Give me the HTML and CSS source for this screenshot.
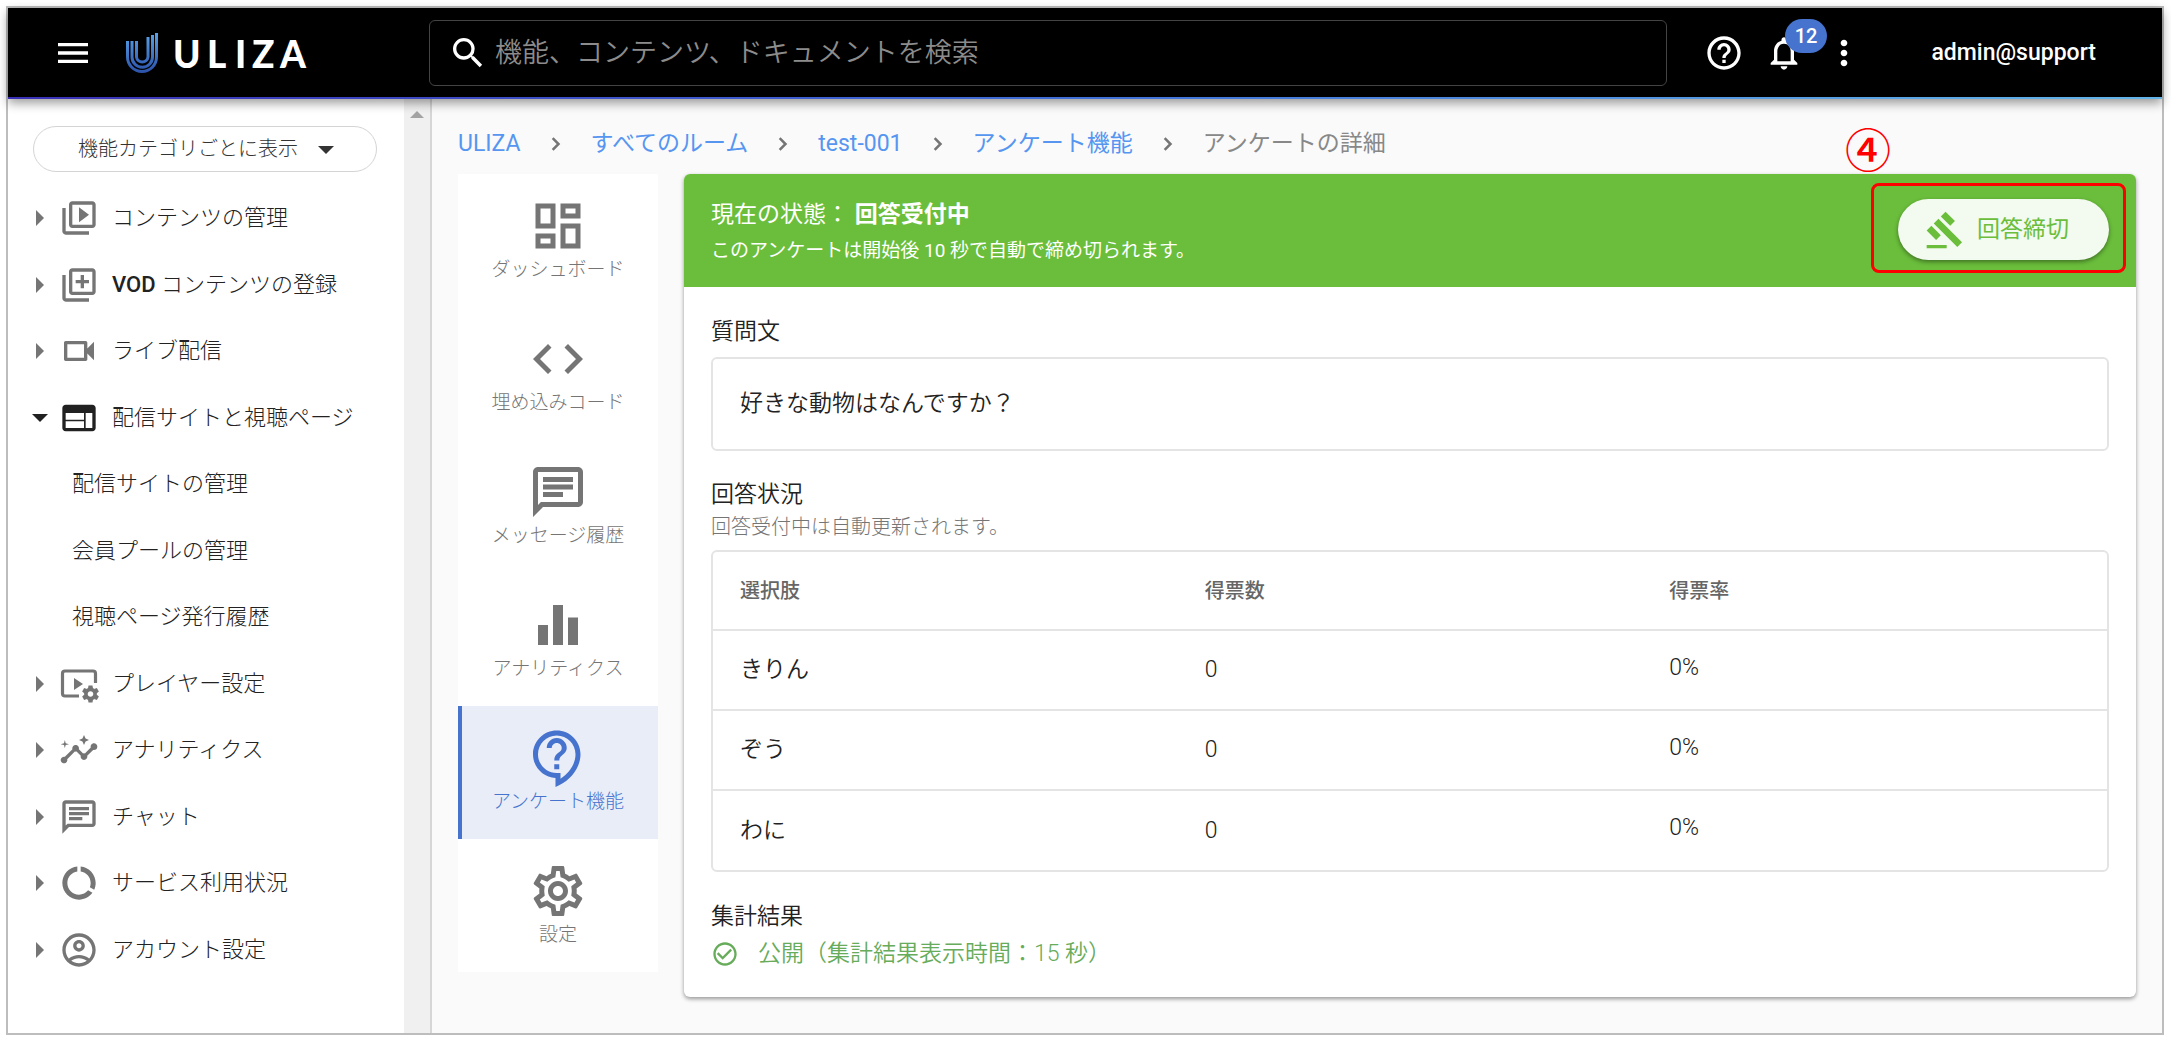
FILE: index.html
```html
<!DOCTYPE html>
<html lang="ja">
<head>
<meta charset="utf-8">
<meta name="viewport" content="width=device-width, initial-scale=1">
<title>アンケートの詳細 - ULIZA</title>
<link rel="stylesheet" href="styles.css">
</head>
<body>
<div class="app">
  <header class="topbar">
    <div class="topbar-brand">
      <button class="icon-button" type="button" aria-label="メニュー">
        <svg class="icon" viewBox="0 0 24 24"><path d="M3 18h18v-2H3v2zm0-5h18v-2H3v2zm0-7v2h18V6H3z"/></svg>
      </button>
      <a class="logo" href="#" aria-label="ULIZA">
        <svg width="200" height="60" viewBox="0 -9 200 60">
          <defs>
            <linearGradient id="mark" x1="0" y1="42" x2="0" y2="0" gradientUnits="userSpaceOnUse">
              <stop offset="0" stop-color="#2a4fa8"/><stop offset="1" stop-color="#5aa5ea"/>
            </linearGradient>
          </defs>
          <g fill="none" stroke="url(#mark)" stroke-width="3">
            <path d="M1.500 9V25a14.500 14.500 0 0 0 29 0V1"/>
            <path d="M6 9V25a10 10 0 0 0 20.500 0V3"/>
            <path d="M10.500 9V25a5.800 5.800 0 0 0 11.500 0V5"/>
          </g>
          <text class="logo-text" y="36" x="47 81 109 126 154">ULIZA</text>
        </svg>
      </a>
    </div>
    <label class="search">
      <svg class="icon" viewBox="0 0 24 24"><path d="M15.500 14h-.79l-.28-.27A6.471 6.471 0 0 0 16 9.500 6.500 6.500 0 1 0 9.500 16c1.610 0 3.090-.59 4.230-1.570l.27.28v.79l5 4.990L20.490 19l-4.990-5zm-6 0C7.010 14 5 11.990 5 9.500S7.010 5 9.500 5 14 7.010 14 9.500 11.990 14 9.500 14z"/></svg>
      <input class="search-input" type="search" placeholder="機能、コンテンツ、ドキュメントを検索" aria-label="検索">
    </label>
    <div class="topbar-actions">
      <button class="icon-button" type="button" aria-label="ヘルプ">
        <svg class="icon" viewBox="0 0 24 24"><path d="M11 18h2v-2h-2v2zm1-16C6.480 2 2 6.480 2 12s4.480 10 10 10 10-4.480 10-10S17.520 2 12 2zm0 18c-4.410 0-8-3.590-8-8s3.590-8 8-8 8 3.590 8 8-3.590 8-8 8zm0-14c-2.210 0-4 1.790-4 4h2c0-1.100.9-2 2-2s2 .9 2 2c0 2-3 1.750-3 5h2c0-2.250 3-2.500 3-5 0-2.210-1.790-4-4-4z"/></svg>
      </button>
      <button class="icon-button" type="button" aria-label="お知らせ">
        <svg class="icon" viewBox="0 0 24 24"><path d="M12 22c1.100 0 2-.9 2-2h-4c0 1.100.9 2 2 2zm6-6v-5c0-3.070-1.630-5.640-4.500-6.320V4c0-.83-.67-1.500-1.500-1.500s-1.500.67-1.500 1.500v.68C7.640 5.360 6 7.920 6 11v5l-2 2v1h16v-1l-2-2zm-2 1H8v-6c0-2.480 1.510-4.500 4-4.500s4 2.020 4 4.500v6z"/></svg>
        <span class="badge">12</span>
      </button>
      <button class="icon-button" type="button" aria-label="その他">
        <svg class="icon" viewBox="0 0 24 24"><path d="M12 8c1.100 0 2-.9 2-2s-.9-2-2-2-2 .9-2 2 .9 2 2 2zm0 2c-1.100 0-2 .9-2 2s.9 2 2 2 2-.9 2-2-.9-2-2-2zm0 6c-1.100 0-2 .9-2 2s.9 2 2 2 2-.9 2-2-.9-2-2-2z"/></svg>
      </button>
      <span class="account">admin@support</span>
    </div>
  </header>

  <div class="body">
    <aside class="sidebar">
      <div class="sidebar-content">
        <div class="view-select">
          <select class="view-select-input" aria-label="表示方法">
            <option>機能カテゴリごとに表示</option>
          </select>
          <svg class="view-select-arrow" viewBox="0 0 16 8"><path d="M0 0h16L8 8z"/></svg>
        </div>
        <nav class="menu">
          <a class="menu-item" href="#">
            <span class="caret"></span>
            <svg class="icon" viewBox="0 0 24 24"><path d="M4 6H2v14c0 1.100.9 2 2 2h14v-2H4V6zm16-4H8c-1.100 0-2 .9-2 2v12c0 1.100.9 2 2 2h12c1.100 0 2-.9 2-2V4c0-1.100-.9-2-2-2zm0 14H8V4h12v12zM12 5.500v9l6-4.500z"/></svg>
            <span>コンテンツの管理</span>
          </a>
          <a class="menu-item" href="#">
            <span class="caret"></span>
            <svg class="icon" viewBox="0 0 24 24"><path d="M4 6H2v14c0 1.100.9 2 2 2h14v-2H4V6zm16-4H8c-1.100 0-2 .9-2 2v12c0 1.100.9 2 2 2h12c1.100 0 2-.9 2-2V4c0-1.100-.9-2-2-2zm0 14H8V4h12v12zM13 14h2v-3h3V9h-3V6h-2v3h-3v2h3z"/></svg>
            <span><span class="latin">VOD</span> コンテンツの登録</span>
          </a>
          <a class="menu-item" href="#">
            <span class="caret"></span>
            <svg class="icon" viewBox="0 0 24 24"><path d="M15 8v8H5V8h10m1-2H4c-.55 0-1 .45-1 1v10c0 .55.450 1 1 1h12c.55 0 1-.45 1-1v-3.500l4 4v-11l-4 4V7c0-.55-.45-1-1-1z"/></svg>
            <span>ライブ配信</span>
          </a>
          <a class="menu-item menu-item-open" href="#">
            <span class="caret"></span>
            <svg class="icon" viewBox="0 0 24 24"><path d="M20 4H4c-1.100 0-1.990.9-1.990 2L2 18c0 1.100.9 2 2 2h16c1.100 0 2-.9 2-2V6c0-1.100-.9-2-2-2zm-5 14H4v-4h11v4zm0-5H4V9h11v4zm5 5h-4V9h4v9z"/></svg>
            <span>配信サイトと視聴ページ</span>
          </a>
          <a class="menu-item menu-subitem" href="#">配信サイトの管理</a>
          <a class="menu-item menu-subitem" href="#">会員プールの管理</a>
          <a class="menu-item menu-subitem" href="#">視聴ページ発行履歴</a>
          <a class="menu-item" href="#">
            <span class="caret"></span>
            <svg class="icon" viewBox="0 0 40 40">
              <path d="M20 32H6a2.500 2.500 0 0 1-2.500-2.500v-20A2.500 2.500 0 0 1 6 7h28a2.500 2.500 0 0 1 2.500 2.500V19" fill="none" stroke="currentColor" stroke-width="3.200"/>
              <path d="M15 14v12l9-6z"/>
              <g transform="translate(31.500 30)">
                <circle r="4.600" fill="none" stroke="currentColor" stroke-width="3.600"/>
                <path d="M-2-8.500h4l.5 3h-5zM-2 8.500h4l.5-3h-5z"/>
                <path d="M-2-8.500h4l.5 3h-5zM-2 8.500h4l.5-3h-5z" transform="rotate(60)"/>
                <path d="M-2-8.500h4l.5 3h-5zM-2 8.500h4l.5-3h-5z" transform="rotate(120)"/>
              </g>
            </svg>
            <span>プレイヤー設定</span>
          </a>
          <a class="menu-item" href="#">
            <span class="caret"></span>
            <svg class="icon" viewBox="0 0 24 24"><path d="M21 8c-1.450 0-2.260 1.440-1.930 2.510l-3.550 3.560c-.3-.09-.74-.09-1.040 0l-2.550-2.550C12.270 10.450 11.460 9 10 9c-1.450 0-2.270 1.440-1.930 2.520l-4.560 4.550C2.440 15.740 1 16.550 1 18c0 1.100.9 2 2 2 1.450 0 2.260-1.440 1.930-2.510l4.550-4.560c.3.09.740.09 1.040 0l2.550 2.550C12.730 16.550 13.540 18 15 18c1.450 0 2.270-1.440 1.930-2.520l3.560-3.550c1.070.33 2.510-.48 2.510-1.930 0-1.100-.9-2-2-2zM15 9l.94-2.070L18 6l-2.060-.93L15 3l-.92 2.070L12 6l2.080.93zM3.500 11L4 9l2-.5L4 8l-.5-2L3 8l-2 .5L3 9z"/></svg>
            <span>アナリティクス</span>
          </a>
          <a class="menu-item" href="#">
            <span class="caret"></span>
            <svg class="icon" viewBox="0 0 24 24"><path d="M4 4h16v12H5.170L4 17.170V4m0-2c-1.100 0-1.990.9-1.990 2L2 22l4-4h14c1.100 0 2-.9 2-2V4c0-1.100-.9-2-2-2H4zm2 10h8v2H6v-2zm0-3h12v2H6V9zm0-3h12v2H6V6z"/></svg>
            <span>チャット</span>
          </a>
          <a class="menu-item" href="#">
            <span class="caret"></span>
            <svg class="icon" viewBox="0 0 24 24"><path d="M13 2.050v3.030c3.390.49 6 3.390 6 6.920 0 .9-.18 1.750-.48 2.540l2.600 1.530c.56-1.240.88-2.620.88-4.070 0-5.180-3.950-9.450-9-9.950zM12 19c-3.870 0-7-3.130-7-7 0-3.530 2.610-6.430 6-6.920V2.050c-5.060.5-9 4.760-9 9.950 0 5.520 4.470 10 9.990 10 3.310 0 6.240-1.610 8.060-4.090l-2.600-1.530C16.170 17.980 14.210 19 12 19z"/></svg>
            <span>サービス利用状況</span>
          </a>
          <a class="menu-item" href="#">
            <span class="caret"></span>
            <svg class="icon" viewBox="0 0 24 24"><path d="M12 2C6.480 2 2 6.480 2 12s4.480 10 10 10 10-4.480 10-10S17.520 2 12 2zM7.350 18.500C8.660 17.560 10.260 17 12 17s3.340.56 4.650 1.500C15.340 19.440 13.740 20 12 20s-3.340-.56-4.650-1.500zm10.790-1.380C16.450 15.800 14.320 15 12 15s-4.450.8-6.140 2.120C4.700 15.730 4 13.950 4 12c0-4.420 3.580-8 8-8s8 3.580 8 8c0 1.950-.7 3.730-1.860 5.120zM12 6c-1.930 0-3.500 1.570-3.500 3.500S10.070 13 12 13s3.500-1.570 3.500-3.500S13.930 6 12 6zm0 5c-.83 0-1.500-.67-1.500-1.500S11.170 8 12 8s1.500.67 1.500 1.500S12.830 11 12 11z"/></svg>
            <span>アカウント設定</span>
          </a>
        </nav>
      </div>
      <div class="scroll-track"><span class="scroll-up"></span></div>
    </aside>

    <main class="main">
      <nav class="breadcrumb" aria-label="パンくず">
        <a href="#">ULIZA</a>
        <svg class="chevron" viewBox="0 0 24 24"><path d="M8 5l7 7-7 7"/></svg>
        <a href="#">すべてのルーム</a>
        <svg class="chevron" viewBox="0 0 24 24"><path d="M8 5l7 7-7 7"/></svg>
        <a href="#">test-001</a>
        <svg class="chevron" viewBox="0 0 24 24"><path d="M8 5l7 7-7 7"/></svg>
        <a href="#">アンケート機能</a>
        <svg class="chevron" viewBox="0 0 24 24"><path d="M8 5l7 7-7 7"/></svg>
        <span>アンケートの詳細</span>
      </nav>

      <div class="columns">
        <nav class="tabs">
          <a class="tab" href="#">
            <svg class="tab-icon" viewBox="0 0 24 24"><path d="M19 5v2h-4V5h4M9 5v6H5V5h4m10 8v6h-4v-6h4M9 17v2H5v-2h4M21 3h-8v6h8V3zM11 3H3v10h8V3zm10 8h-8v10h8V11zm-10 4H3v6h8v-6z"/></svg>
            <span>ダッシュボード</span>
          </a>
          <a class="tab" href="#">
            <svg class="tab-icon" viewBox="0 0 24 24"><path d="M9.400 16.600L4.800 12l4.600-4.600L8 6l-6 6 6 6 1.400-1.400zm5.200 0l4.600-4.600-4.600-4.600L16 6l6 6-6 6-1.400-1.400z"/></svg>
            <span>埋め込みコード</span>
          </a>
          <a class="tab" href="#">
            <svg class="tab-icon" viewBox="0 0 24 24"><path d="M4 4h16v12H5.170L4 17.170V4m0-2c-1.100 0-1.990.9-1.990 2L2 22l4-4h14c1.100 0 2-.9 2-2V4c0-1.100-.9-2-2-2H4zm2 10h8v2H6v-2zm0-3h12v2H6V9zm0-3h12v2H6V6z"/></svg>
            <span>メッセージ履歴</span>
          </a>
          <a class="tab" href="#">
            <svg class="tab-icon" viewBox="0 0 24 24"><path d="M10 20h4V4h-4v16zm-6 0h4v-8H4v8zM16 9v11h4V9h-4z"/></svg>
            <span>アナリティクス</span>
          </a>
          <a class="tab tab-active" href="#" aria-current="page">
            <svg class="tab-icon" viewBox="0 0 24 24"><path d="M11 23.590v-3.600c-5.010-.26-9-4.420-9-9.490C2 5.260 6.260 1 11.500 1S21 5.260 21 10.500c0 4.950-3.440 9.930-8.570 12.400l-1.430.69zM11.500 3C7.360 3 4 6.360 4 10.500S7.360 18 11.500 18H13v2.300c3.640-2.300 6-6.080 6-9.800C19 6.360 15.640 3 11.500 3zm-1 11.500h2v2h-2zm2-1.500h-2c0-3.250 3-3 3-5 0-1.100-.9-2-2-2s-2 .9-2 2h-2c0-2.210 1.790-4 4-4s4 1.790 4 4c0 2.500-3 2.750-3 5z"/></svg>
            <span>アンケート機能</span>
          </a>
          <a class="tab" href="#">
            <svg class="tab-icon" viewBox="0 0 24 24"><path d="M19.430 12.980c.04-.32.070-.64.070-.98 0-.34-.03-.66-.07-.98l2.110-1.650c.19-.15.240-.42.120-.64l-2-3.460c-.09-.16-.26-.25-.44-.25-.06 0-.12.010-.17.030l-2.490 1c-.52-.4-1.080-.73-1.690-.98l-.38-2.650C14.460 2.180 14.250 2 14 2h-4c-.25 0-.46.180-.49.420l-.38 2.650c-.61.250-1.170.590-1.690.980l-2.490-1c-.06-.02-.12-.03-.18-.03-.17 0-.34.090-.43.250l-2 3.460c-.13.220-.07.490.120.640l2.110 1.650c-.04.320-.07.650-.07.980 0 .330.030.660.070.980l-2.110 1.650c-.19.150-.24.420-.12.640l2 3.460c.09.160.260.250.440.250.060 0 .120-.01.170-.03l2.490-1c.52.400 1.080.730 1.690.980l.38 2.650c.03.240.240.420.490.420h4c.25 0 .460-.18.490-.42l.38-2.650c.61-.25 1.170-.59 1.690-.98l2.490 1c.06.020.120.030.180.030.170 0 .340-.09.430-.25l2-3.460c.12-.22.070-.49-.12-.64l-2.110-1.650zm-1.980-1.710c.04.310.050.520.050.730 0 .210-.02.430-.05.730l-.14 1.130.89.700 1.080.840-.7 1.210-1.270-.51-1.040-.42-.9.680c-.43.320-.84.560-1.250.730l-1.060.430-.16 1.130-.2 1.350h-1.400l-.19-1.350-.16-1.130-1.060-.43c-.43-.18-.83-.41-1.230-.71l-.91-.7-1.060.430-1.270.510-.7-1.210 1.080-.84.890-.7-.14-1.130c-.03-.31-.05-.54-.05-.74s.02-.43.050-.73l.14-1.130-.89-.7-1.080-.84.700-1.210 1.270.510 1.040.420.900-.68c.43-.32.840-.56 1.250-.73l1.060-.43.160-1.130.200-1.350h1.390l.19 1.350.160 1.130 1.060.430c.43.180.830.410 1.230.710l.91.700 1.060-.43 1.270-.51.700 1.210-1.070.850-.89.700.140 1.130zM12 8c-2.210 0-4 1.790-4 4s1.790 4 4 4 4-1.790 4-4-1.790-4-4-4zm0 6c-1.100 0-2-.9-2-2s.9-2 2-2 2 .9 2 2-.9 2-2 2z"/></svg>
            <span>設定</span>
          </a>
        </nav>

        <section class="card">
          <div class="status">
            <div>
              <p class="status-title">現在の状態： <strong>回答受付中</strong></p>
              <p class="status-note">このアンケートは開始後 10 秒で自動で締め切られます。</p>
            </div>
            <div class="status-action">
              <button class="close-button" type="button">
                <svg class="icon" viewBox="0 0 24 24"><path d="M1 21h12v2H1zM5.245 8.070l2.830-2.827 14.140 14.142-2.828 2.828zM12.317 1l5.657 5.656-2.830 2.830-5.654-5.660zM3.825 9.485l5.657 5.657-2.828 2.828-5.657-5.657z"/></svg>
                <span>回答締切</span>
              </button>
              <span class="callout-box"></span>
              <span class="callout-number">④</span>
            </div>
          </div>

          <div class="card-body">
            <h2 class="heading">質問文</h2>
            <p class="question">好きな動物はなんですか？</p>

            <h2 class="heading">回答状況</h2>
            <p class="note">回答受付中は自動更新されます。</p>
            <table class="results">
              <thead>
                <tr><th scope="col">選択肢</th><th scope="col">得票数</th><th scope="col">得票率</th></tr>
              </thead>
              <tbody>
                <tr><td>きりん</td><td>0</td><td class="rate">0%</td></tr>
                <tr><td>ぞう</td><td>0</td><td class="rate">0%</td></tr>
                <tr><td>わに</td><td>0</td><td class="rate">0%</td></tr>
              </tbody>
            </table>

            <h2 class="heading">集計結果</h2>
            <p class="published">
              <svg class="published-icon" viewBox="0 0 24 24"><path d="M16.590 7.580L10 14.170l-3.590-3.580L5 12l5 5 8-8zM12 2C6.480 2 2 6.480 2 12s4.480 10 10 10 10-4.480 10-10S17.520 2 12 2zm0 18c-4.420 0-8-3.580-8-8s3.580-8 8-8 8 3.580 8 8-3.580 8-8 8z"/></svg>
              <span>公開（集計結果表示時間：15 秒）</span>
            </p>
          </div>
        </section>
      </div>
    </main>
  </div>
</div>
</body>
</html>
```
FILE: styles.css
```css
* {
  box-sizing: border-box;
}

body {
  margin: 0;
  padding: 6px 7px 9px 6px;
  background: #fff;
  color: #222;
  font-family: Roboto, "Noto Sans CJK JP", sans-serif;
  font-size: 23px;
  font-weight: 300;
  line-height: 32px;
}

a {
  color: inherit;
  text-decoration: none;
}

p,
h2 {
  margin: 0;
  font: inherit;
}

button {
  padding: 0;
  border: 0;
  background: none;
  color: inherit;
  font: inherit;
}

svg {
  display: block;
  flex: none;
  fill: currentColor;
}

.icon {
  width: 40px;
  height: 40px;
}

.app {
  display: flex;
  flex-direction: column;
  min-height: calc(100vh - 15px);
  border: 2px solid #bdbdbd;
}

/* Top bar */

.topbar {
  position: relative;
  z-index: 1;
  display: grid;
  grid-template-columns: 421px 1fr 495px;
  align-items: center;
  height: 91px;
  background: #000;
  border-bottom: 2px solid;
  border-image: linear-gradient(90deg, #3a30b8, #3f6fd8 50%, #62b5e8) 2;
  box-shadow: 0 4px 10px rgba(0, 0, 0, 0.4);
  color: #fff;
}

.topbar-brand {
  display: flex;
  align-items: center;
  gap: 33px;
  padding-left: 45px;
}

.icon-button {
  position: relative;
  width: 40px;
  height: 40px;
}

.logo-text {
  fill: #fff;
  font-family: Lato, sans-serif;
  font-size: 37px;
  font-weight: 900;
}

.search {
  display: flex;
  align-items: center;
  gap: 7px;
  height: 66px;
  padding: 0 18px;
  border: 1px solid #444;
  border-radius: 6px;
}

.search-input {
  flex: 1;
  min-width: 0;
  padding: 0;
  border: 0;
  outline: 0;
  background: none;
  color: #fff;
  font: inherit;
  font-size: 27px;
  font-weight: 350;
}

.search-input::placeholder {
  color: #8c8c8c;
}

.topbar-actions {
  display: flex;
  align-items: center;
  gap: 20px;
  padding: 0 66px 0 37px;
}

.badge {
  position: absolute;
  top: -14px;
  left: 21px;
  width: 42px;
  border-radius: 17px;
  background: #4573cd;
  font-size: 20px;
  font-weight: 500;
  line-height: 34px;
  text-align: center;
}

.account {
  margin-left: auto;
  font-size: 23px;
  font-weight: 500;
}

.body {
  display: flex;
  flex: 1;
}

/* Sidebar */

.sidebar {
  display: flex;
  flex: none;
  width: 424px;
  border-right: 2px solid #d6d6d6;
}

.sidebar-content {
  display: flex;
  flex: 1;
  flex-direction: column;
  padding: 27px 0 50px;
}

.scroll-track {
  display: flex;
  justify-content: center;
  width: 26px;
  padding-top: 12px;
  background: #f0f0f0;
}

.scroll-up {
  height: 7px;
  border: 7px solid transparent;
  border-top: 0;
  border-bottom-color: #a3a3a3;
}

.view-select {
  position: relative;
  margin: 0 27px 13px 25px;
}

.view-select-input {
  width: 100%;
  height: 46px;
  padding: 0 44px;
  appearance: none;
  border: 1px solid #d4d4d4;
  border-radius: 23px;
  background: #fff;
  color: #333;
  font: inherit;
  font-size: 20px;
}

.view-select-arrow {
  position: absolute;
  top: 20px;
  right: 43px;
  width: 16px;
  height: 8px;
  color: #333;
  pointer-events: none;
}

.menu {
  display: flex;
  flex: 1;
  flex-direction: column;
}

.menu-item {
  display: flex;
  flex: 1;
  align-items: center;
  padding-left: 24px;
  font-size: 22px;
}

.menu-item .icon {
  margin: 0 13px 0 11px;
  color: #757575;
}

.menu-item-open .icon {
  color: #212121;
}

.menu-subitem {
  padding-left: 64px;
}

.latin {
  font-weight: 500;
}

.caret {
  width: 16px;
}

.caret::before {
  content: "";
  display: block;
  width: 0;
  margin-left: 4px;
  border: 8px solid transparent;
  border-right: 0;
  border-left-color: #757575;
}

.menu-item-open .caret::before {
  margin-left: 0;
  border: 8px solid transparent;
  border-bottom: 0;
  border-top-color: #212121;
}

/* Main area */

.main {
  flex: 1;
  min-width: 0;
  padding: 29px 26px 34px;
  background: #fafafa;
}

.breadcrumb {
  display: flex;
  align-items: center;
  gap: 23px;
  margin-bottom: 14px;
  color: #888;
}

.breadcrumb a {
  color: #5696f0;
}

.breadcrumb a,
.breadcrumb span {
  font-weight: 400;
}

.chevron {
  width: 24px;
  height: 24px;
  padding: 2px;
  fill: none;
  stroke: #757575;
  stroke-width: 3;
}

.columns {
  display: flex;
  align-items: flex-start;
  gap: 26px;
}

.tabs {
  flex: none;
  width: 200px;
  background: #fff;
}

.tab {
  display: flex;
  flex-direction: column;
  align-items: center;
  height: 133px;
  padding-top: 22px;
  color: #757575;
  font-size: 19px;
  line-height: 28px;
}

.tab-icon {
  width: 60px;
  height: 60px;
}

.tab-active {
  background: #e9edf8;
  box-shadow: inset 4px 0 #4573cd;
  color: #4573cd;
}

/* Survey card */

.card {
  flex: 1;
  min-width: 0;
  border-radius: 6px;
  background: #fff;
  box-shadow: 0 2px 4px rgba(0, 0, 0, 0.4);
}

.status {
  display: flex;
  align-items: flex-start;
  justify-content: space-between;
  padding: 25px 27px 20px;
  border-radius: 6px 6px 0 0;
  background: #6abe3b;
  color: #fff;
  font-weight: 400;
}

.status-note {
  margin-top: 4px;
  font-size: 19px;
}

.status-action {
  position: relative;
}

.close-button {
  display: flex;
  align-items: center;
  gap: 12px;
  height: 61px;
  padding: 0 40px 0 27px;
  border-radius: 31px;
  background: #f3faf0;
  box-shadow: 0 2px 4px rgba(0, 0, 0, 0.4);
  color: #6abe3b;
}

.callout-box {
  position: absolute;
  inset: -16px -17px -13px -27px;
  border: 3px solid #f00;
  border-radius: 8px;
}

.callout-number {
  position: absolute;
  top: -71px;
  left: -53px;
  color: #f00;
  font-size: 46px;
  font-weight: 500;
  line-height: 46px;
}

.card-body {
  padding: 29px 27px 27px;
}

.heading,
.question,
.results td,
.published {
  font-weight: 350;
}

.question {
  margin: 9px 0 28px;
  padding: 29px 27px;
  border: 2px solid #e4e4e4;
  border-radius: 6px;
}

.note {
  margin-bottom: 7px;
  color: #757575;
  font-size: 20px;
}

.results {
  width: 100%;
  margin-bottom: 29px;
  border: 2px solid #e4e4e4;
  border-radius: 6px;
  border-spacing: 0;
  table-layout: fixed;
}

.results th,
.results td {
  height: 80px;
  padding: 0 27px;
  border-bottom: 2px solid #e4e4e4;
  text-align: left;
}

.results thead th {
  height: 79px;
  color: #666;
  font-size: 20px;
  font-weight: 500;
}

.results tr:last-child td {
  height: 79px;
  border-bottom: 0;
}

.results .rate {
  padding-bottom: 5px;
}

.published {
  display: flex;
  align-items: center;
  gap: 19px;
  margin-top: 5px;
  color: #67ac5b;
}

.published-icon {
  width: 28px;
  height: 28px;
}
```
